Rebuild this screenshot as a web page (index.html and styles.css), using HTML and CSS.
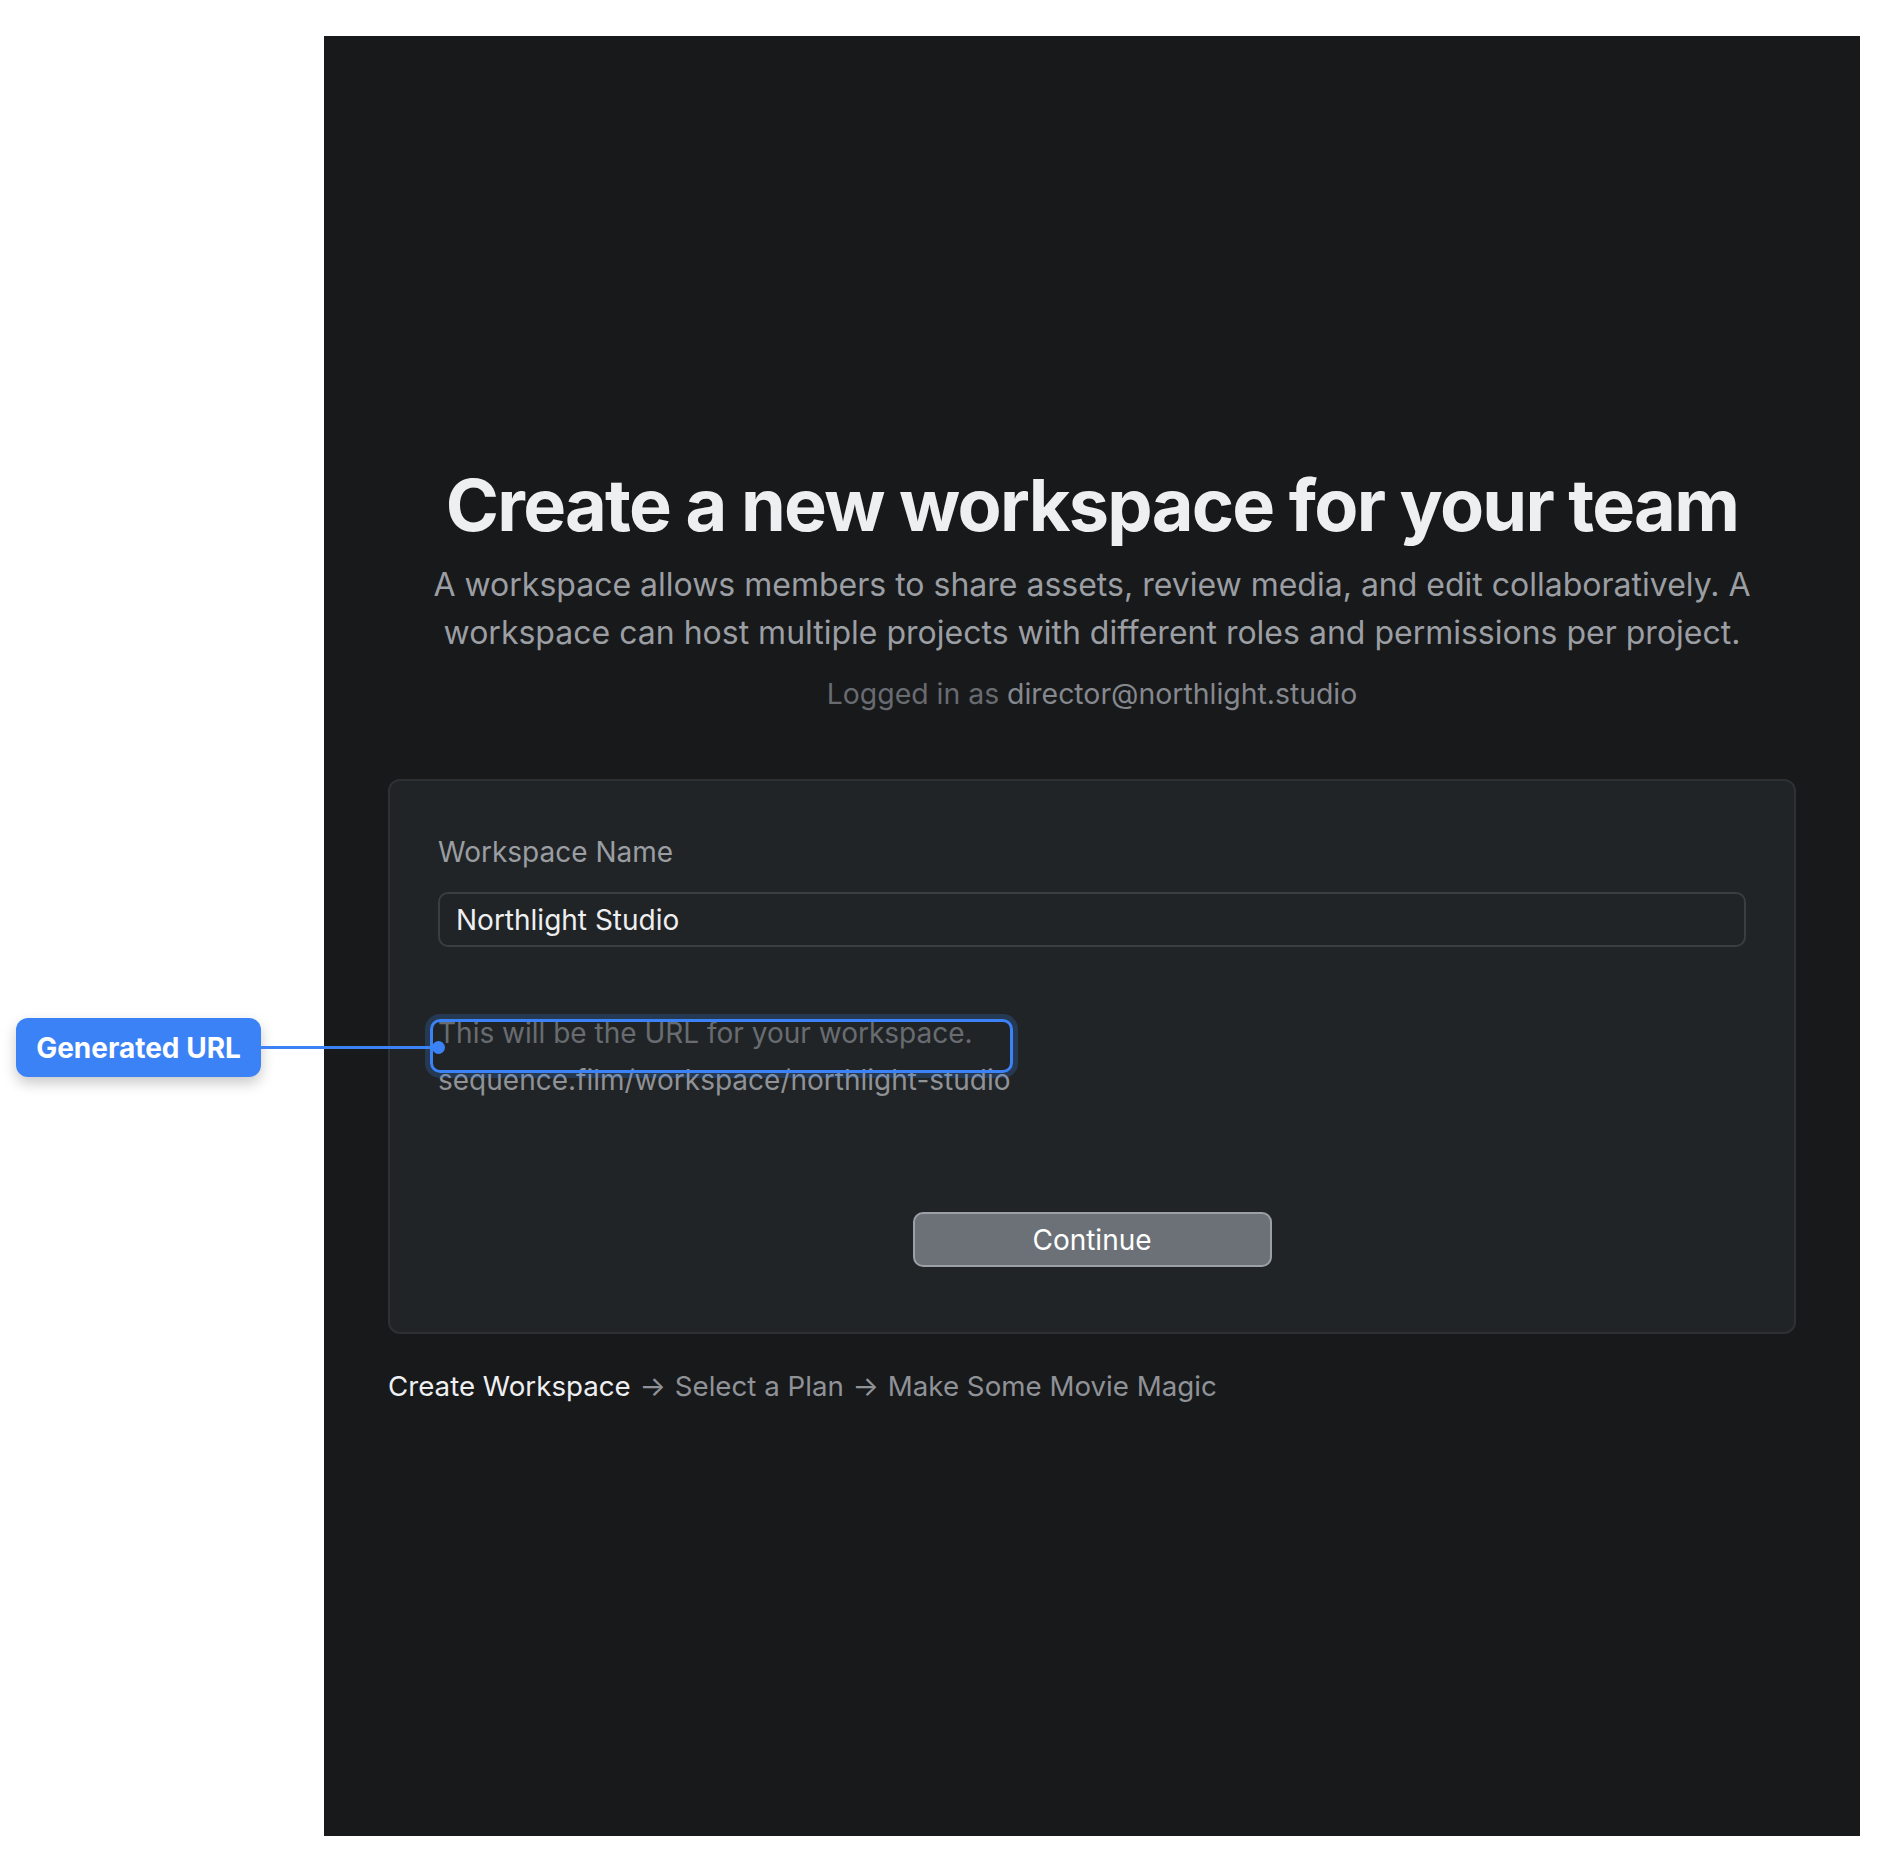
FILE: index.html
```html
<!DOCTYPE html>
<html lang="en">
<head>
    <meta charset="UTF-8">
    <meta name="viewport" content="width=device-width, initial-scale=1.0">
    <title>Create Workspace</title>
    <link rel="stylesheet" href="styles.css">
</head>
<body>

    <!-- Onboarding panel -->
    <main class="panel">
        <h1 class="title">Create a new workspace for your team</h1>
        <p class="intro">A workspace allows members to share assets, review media, and edit collaboratively. A workspace can host multiple projects with different roles and permissions per project.</p>
        <p class="login">Logged in as <span class="email">director@northlight.studio</span></p>

        <div class="card">
            <label class="field-label" for="workspaceName">Workspace Name</label>
            <input class="field-input" type="text" id="workspaceName" value="Northlight Studio">

            <div class="url-info">
                <div class="url-hint">This will be the URL for your workspace.</div>
                <div class="url-value">sequence.film/workspace/northlight-studio</div>
            </div>

            <div class="actions">
                <button class="continue-btn">Continue</button>
            </div>
        </div>

        <div class="steps">
            <span class="step-current">Create Workspace</span>
            <span class="arrow">&rarr;</span> Select a Plan
            <span class="arrow">&rarr;</span> Make Some Movie Magic
        </div>
    </main>

    <!-- Annotation overlay -->
    <div class="callout">Generated URL</div>
    <div class="callout-line"></div>
    <div class="highlight"></div>
    <div class="callout-dot"></div>

</body>
</html>
```

FILE: styles.css
```css
/* Reset default styles */
* {
    margin: 0;
    padding: 0;
    box-sizing: border-box;
}

body {
    font-family: Inter, "Noto Sans", sans-serif;
    background-color: #fff;
    width: 1896px;
    height: 1872px;
    position: relative;
}

/* Dark onboarding panel */
.panel {
    margin: 36px 0 0 324px;
    width: 1536px;
    height: 1800px;
    padding: 426px 64px 0;
    background-color: #18191b;
}

.title {
    font-size: 72px;
    line-height: 86px;
    font-weight: 700;
    letter-spacing: -0.024em;
    color: #eeeff1;
    text-align: center;
}

.intro {
    margin-top: 13px;
    font-size: 32px;
    line-height: 48px;
    color: #9b9ea3;
    text-align: center;
}

.login {
    margin-top: 19px;
    font-size: 28.4px;
    line-height: 36px;
    color: #686b70;
    text-align: center;
}

.login .email {
    color: #85888d;
}

/* Form card */
.card {
    margin-top: 67px;
    padding: 54px 48px 65px;
    background-color: #212426;
    border: 2px solid #2e3134;
    border-radius: 12px;
}

.field-label {
    display: block;
    font-size: 28px;
    line-height: 34px;
    color: #9a9da2;
}

.field-input {
    display: block;
    width: 100%;
    height: 55px;
    margin-top: 23px;
    padding: 0 16px;
    font-family: inherit;
    font-size: 28px;
    color: #eeeff1;
    background-color: #212426;
    border: 2px solid #3a3d41;
    border-radius: 10px;
    outline: none;
}

.url-info {
    margin-top: 63px;
    font-size: 28px;
    line-height: 47px;
}

.url-hint {
    color: #686c71;
}

.url-value {
    color: #8f9297;
}

.actions {
    margin-top: 108px;
    display: flex;
    justify-content: center;
}

.continue-btn {
    width: 359px;
    height: 55px;
    font-family: inherit;
    font-size: 28px;
    color: #fff;
    background-color: #6b7177;
    border: 2px solid #9aa0a6;
    border-radius: 10px;
    cursor: pointer;
}

/* Step breadcrumb */
.steps {
    margin-top: 32px;
    font-size: 27.7px;
    line-height: 40px;
    color: #8f9297;
}

.step-current {
    color: #eeeff1;
}

.arrow {
    margin: 0 1px;
}

/* Annotation */
.callout {
    position: absolute;
    left: 16px;
    top: 1018px;
    width: 245px;
    height: 59px;
    display: flex;
    align-items: center;
    justify-content: center;
    font-size: 28px;
    font-weight: 700;
    color: #fff;
    background-color: #3b82f6;
    border-radius: 12px;
    box-shadow: 0 6px 14px rgba(0, 0, 0, 0.22);
}

.callout-line {
    position: absolute;
    left: 261px;
    top: 1046px;
    width: 177px;
    height: 3px;
    background-color: #3b82f6;
}

.highlight {
    position: absolute;
    left: 430px;
    top: 1019px;
    width: 583px;
    height: 54px;
    border: 3px solid #3b82f6;
    border-radius: 10px;
    box-shadow: 0 0 0 5px rgba(59, 130, 246, 0.22);
}

.callout-dot {
    position: absolute;
    left: 432px;
    top: 1041px;
    width: 13px;
    height: 13px;
    border-radius: 50%;
    background-color: #3b82f6;
}
```
